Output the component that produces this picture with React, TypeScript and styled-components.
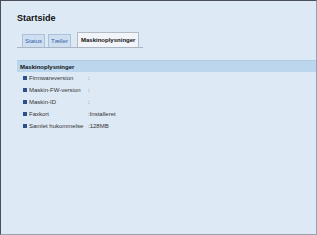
import React from "react";
import styled, { createGlobalStyle } from "styled-components";

const GlobalStyle = createGlobalStyle`
  html, body {
    margin: 0;
    padding: 0;
    background: #dde9f5;
  }
`;

const tabs = [
  { label: "Status", active: false },
  { label: "Tæller", active: false },
  { label: "Maskinoplysninger", active: true },
];

const rows = [
  { label: "Firmwareversion", value: ":" },
  { label: "Maskin-FW-version", value: ":" },
  { label: "Maskin-ID", value: ":" },
  { label: "Faxkort", value: ":Installeret" },
  { label: "Samlet hukommelse", value: ":128MB" },
];

export default function App() {
  return (
    <>
      <GlobalStyle />
      <Frame>
        <Title>Startside</Title>
        <TabBar>
          {tabs.map((t) => (
            <Tab key={t.label} $active={t.active}>
              {t.label}
            </Tab>
          ))}
        </TabBar>
        <SectionHeader>Maskinoplysninger</SectionHeader>
        <List>
          {rows.map((r) => (
            <Row key={r.label}>
              <Bullet />
              <Label>{r.label}</Label>
              <Value>{r.value}</Value>
            </Row>
          ))}
        </List>
      </Frame>
    </>
  );
}

const Frame = styled.div`
  width: 317px;
  height: 235px;
  box-sizing: border-box;
  background: #dde9f5;
  border-top: 1px solid #4b4f57;
  border-left: 1px solid #4b4f57;
  border-right: 1px solid #98a1ad;
  border-bottom: 1px solid #98a1ad;
  padding: 12px 0 0 16px;
  display: flex;
  flex-direction: column;
  font-family: "Liberation Sans", Arial, sans-serif;
  color: #2b2b2b;
`;

const Title = styled.div`
  font-size: 9px;
  line-height: 11px;
  font-weight: bold;
  color: #111;
`;

const TabBar = styled.div`
  margin-top: 9px;
  width: 126px;
  height: 15px;
  box-sizing: border-box;
  padding-left: 5px;
  display: flex;
  align-items: flex-end;
  gap: 3px;
  border-bottom: 1px solid #a9b5c2;
`;

const Tab = styled.div<{ $active: boolean }>`
  box-sizing: border-box;
  height: ${(p) => (p.$active ? "15px" : "13px")};
  padding: 0 ${(p) => (p.$active ? "3px" : "2px")};
  display: flex;
  align-items: center;
  font-size: 6px;
  font-weight: ${(p) => (p.$active ? "bold" : "normal")};
  color: ${(p) => (p.$active ? "#111" : "#3a5ea6")};
  background: ${(p) => (p.$active ? "#f1f5fa" : "#cddff1")};
  border: 1px solid ${(p) => (p.$active ? "#b3bcc6" : "#aac1d8")};
  border-bottom: none;
  margin-left: ${(p) => (p.$active ? "3px" : "0")};
`;

const SectionHeader = styled.div`
  margin-top: 12px;
  height: 12px;
  box-sizing: border-box;
  padding-left: 3px;
  display: flex;
  align-items: center;
  background: #bcd6ee;
  border-top: 1px solid #b0c9e2;
  font-size: 6px;
  font-weight: bold;
  color: #111;
`;

const List = styled.div`
  display: flex;
  flex-direction: column;
`;

const Row = styled.div`
  height: 12px;
  display: flex;
  align-items: center;
  padding-left: 6px;
  font-size: 6px;
  color: #333;
`;

const Bullet = styled.span`
  width: 4px;
  height: 4px;
  background: #2b4f8c;
  margin-right: 2px;
  flex-shrink: 0;
`;

const Label = styled.span`
  width: 59px;
`;

const Value = styled.span``;
